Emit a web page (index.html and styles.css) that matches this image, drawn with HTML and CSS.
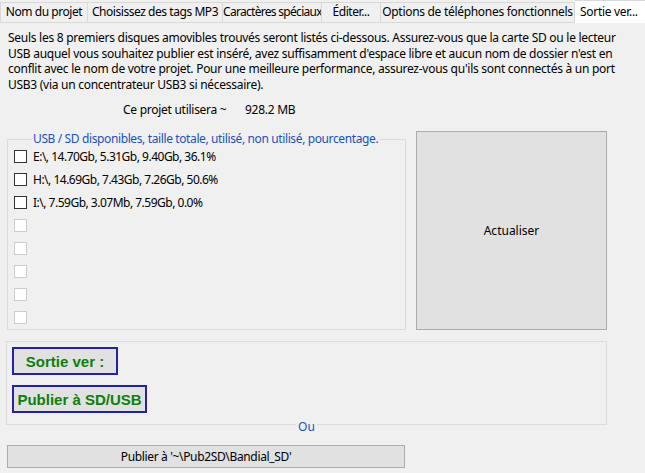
FILE: index.html
```html
<!DOCTYPE html>
<html lang="fr">
<head>
<meta charset="utf-8">
<title>Sortie vers</title>
<link rel="stylesheet" href="styles.css">
</head>
<body>
<div class="tabs">
  <div class="tab t1">Nom du projet</div>
  <div class="tab t2">Choisissez des tags MP3</div>
  <div class="tab t3">Caractères spéciaux</div>
  <div class="tab t4">Éditer...</div>
  <div class="tab t5">Options de téléphones fonctionnels</div>
  <div class="tab t6 active">Sortie ver...</div>
</div>
<div class="page">
  <p class="intro">Seuls les 8 premiers disques amovibles trouvés seront listés ci-dessous. Assurez-vous que la carte SD ou le lecteur<br>USB auquel vous souhaitez publier est inséré, avez suffisamment d'espace libre et aucun nom de dossier n'est en<br>conflit avec le nom de votre projet. Pour une meilleure performance, assurez-vous qu'ils sont connectés à un port<br>USB3 (via un concentrateur USB3 si nécessaire).</p>
  <div class="usage"><span class="usage-label">Ce projet utilisera ~</span><span class="usage-value">928.2 MB</span></div>
  <div class="main">
    <fieldset class="drives">
      <legend class="drives-title">USB / SD disponibles, taille totale, utilisé, non utilisé, pourcentage.</legend>
      <ul class="drive-list">
        <li class="drive"><span class="box"></span><span class="drive-text">E:\, 14.70Gb, 5.31Gb, 9.40Gb, 36.1%</span></li>
        <li class="drive"><span class="box"></span><span class="drive-text">H:\, 14.69Gb, 7.43Gb, 7.26Gb, 50.6%</span></li>
        <li class="drive"><span class="box"></span><span class="drive-text">I:\, 7.59Gb, 3.07Mb, 7.59Gb, 0.0%</span></li>
        <li class="drive"><span class="box off"></span></li>
        <li class="drive"><span class="box off"></span></li>
        <li class="drive"><span class="box off"></span></li>
        <li class="drive"><span class="box off"></span></li>
        <li class="drive"><span class="box off"></span></li>
      </ul>
    </fieldset>
    <button class="refresh">Actualiser</button>
  </div>
  <div class="publish">
    <button class="green-btn sortie">Sortie ver :</button>
    <button class="green-btn publier">Publier à SD/USB</button>
  </div>
  <div class="or"><span class="or-text">Ou</span></div>
  <button class="local">Publier à '~\Pub2SD\Bandial_SD'</button>
</div>
</body>
</html>
```
FILE: styles.css
```css
html, body {
  margin: 0;
  padding: 0;
}
body {
  background: #f0f0f0;
  font-family: "Noto Sans", "Open Sans", sans-serif;
  font-size: 12px;
  color: #000;
  width: 645px;
  height: 473px;
  overflow: hidden;
}
.tabs {
  display: flex;
  height: 23px;
  box-sizing: border-box;
  border-bottom: 1px solid #d9d9d9;
  white-space: nowrap;
}
.tab {
  box-sizing: border-box;
  margin-top: 2px;
  height: 20px;
  line-height: 18px;
  border: 1px solid #d9d9d9;
  border-bottom: none;
  border-left: none;
  background: #f0f0f0;
  text-align: center;
  letter-spacing: -0.45px;
  overflow: hidden;
}
.t1 { width: 88px; border-left: 1px solid #d9d9d9; }
.t2 { width: 135px; }
.t3 { width: 99px; letter-spacing: -0.7px; }
.t4 { width: 59px; }
.t5 { width: 194px; letter-spacing: -0.3px; }
.t6 { width: 70px; }
.tab.active {
  margin-top: 0;
  height: 23px;
  line-height: 22px;
  background: #fff;
  flex: 1;
  border-right: none;
  text-align: left;
  padding-left: 5px;
  letter-spacing: -0.3px;
}
.page {
  display: flex;
  flex-direction: column;
  align-items: flex-start;
}
.intro {
  margin: 7px 0 0 8px;
  line-height: 15.5px;
  white-space: nowrap;
  letter-spacing: -0.27px;
}
.usage {
  margin: 10px 0 0 123px;
  line-height: 16px;
  display: flex;
  letter-spacing: -0.27px;
}
.usage-label {
  width: 122px;
}
.main {
  margin-top: 13px;
  display: flex;
  align-items: flex-start;
  gap: 10px;
}
.drives {
  margin: 0 0 0 7px;
  width: 399px;
  height: 199px;
  box-sizing: border-box;
  padding: 0 0 0 6px;
  border: 1px solid #dcdcdc;
  min-width: 0;
}
.drives-title {
  color: #2050c0;
  line-height: 16px;
  padding: 0 1px;
  margin-left: 18px;
  letter-spacing: -0.38px;
}
.drive-list {
  list-style: none;
  margin: -2px 0 0 0;
  padding: 0;
}
.drive {
  height: 23px;
  display: flex;
  align-items: center;
  gap: 6px;
}
.box {
  width: 13px;
  height: 13px;
  box-sizing: border-box;
  border: 1px solid #333;
  background: #fff;
}
.box.off {
  border-color: #cccccc;
}
.drive-text {
  letter-spacing: -0.5px;
}
.refresh {
  width: 191px;
  height: 199px;
  background: #e1e1e1;
  border: 1px solid #adadad;
  font: inherit;
  color: #000;
  padding: 0;
}
.publish {
  margin: 11px 0 0 6px;
  width: 601px;
  height: 84px;
  box-sizing: border-box;
  border: 1px solid #dcdcdc;
  padding: 5px 0 0 5px;
  display: flex;
  flex-direction: column;
  align-items: flex-start;
  gap: 10px;
}
.green-btn {
  height: 28px;
  box-sizing: border-box;
  background: #e1e1e1;
  border: 2px solid #2323a8;
  color: #0c7f0c;
  font-family: "Liberation Sans", Arial, sans-serif;
  font-weight: bold;
  font-size: 15px;
  padding: 0;
  white-space: nowrap;
}
.sortie {
  width: 106px;
}
.publier {
  width: 135px;
}
.or {
  margin: -5px 0 0 6px;
  width: 601px;
  text-align: center;
  line-height: 14px;
}
.or-text {
  background: #f0f0f0;
  color: #2050c0;
  padding: 0 2px;
}
.local {
  margin: 11px 0 0 7px;
  width: 398px;
  height: 23px;
  box-sizing: border-box;
  background: #e1e1e1;
  border: 1px solid #adadad;
  font: inherit;
  color: #000;
  padding: 0;
  letter-spacing: -0.35px;
}
```
